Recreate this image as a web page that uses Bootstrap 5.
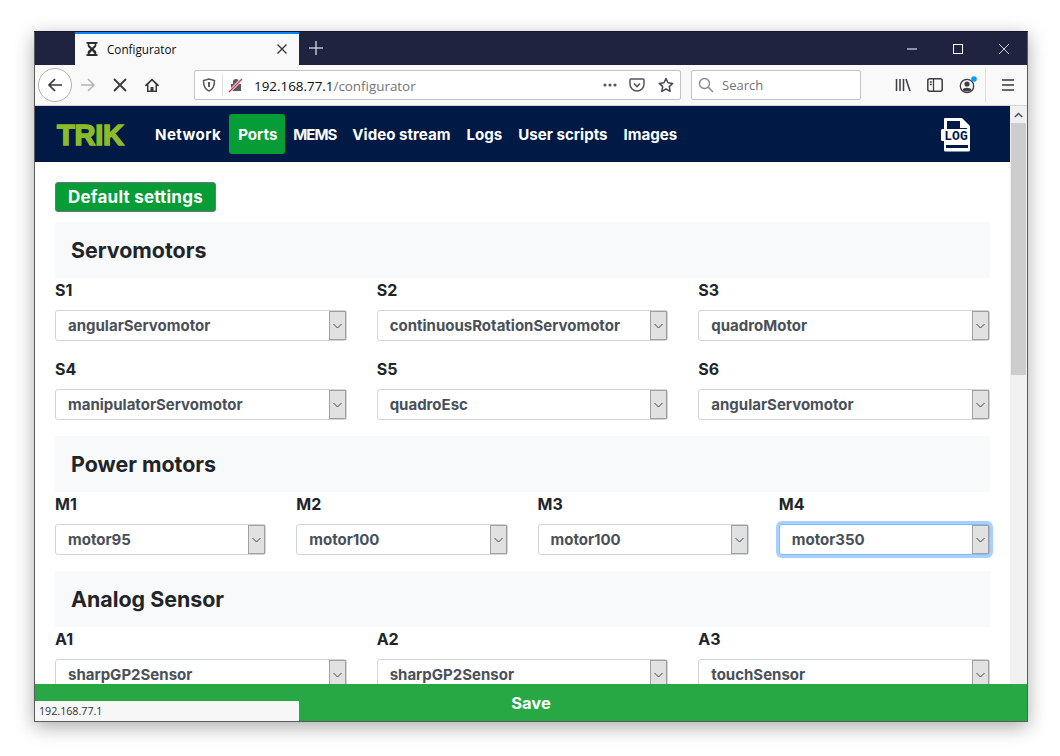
<!DOCTYPE html>
<html lang="en">
<head>
  <meta charset="UTF-8">
  <meta name="viewport" content="width=device-width, initial-scale=1.0">
  <title>Configurator</title>
  <link href="https://cdn.jsdelivr.net/npm/bootstrap@5.3.0/dist/css/bootstrap.min.css" rel="stylesheet">
  <style>
    html, body { height: 100%; overflow: hidden; background: #fff; }
    body { font-family: Inter, "Liberation Sans", sans-serif; }
    .win {
      width: 994px; height: 691px; margin: 31px 0 0 34px;
      border: 1px solid #5c5c5c; border-top-color: #14162a;
      box-shadow: 0 5px 18px rgba(0,0,0,.33);
      position: relative; overflow: hidden;
    }
    /* browser chrome */
    .titlebar { height: 33px; background: #202340; padding-left: 40px; }
    .tab {
      width: 224px; height: 33px; background: #f9f9fa; border-top: 2px solid #0a84ff;
      padding: 0 11px 2px 10px; font: 11.7px "Open Sans", sans-serif; color: #0c0c0d;
    }
    .tab-title { margin-left: 8px; flex: 1; }
    .newtab { margin-left: 2px; padding-bottom: 1px; }
    .winbtns { margin-left: auto; }
    .winbtn { width: 46px; height: 33px; display: flex; align-items: center; justify-content: center; }
    .toolbar { height: 41px; background: #f9f9fa; border-bottom: 1px solid #d6d6d7; }
    .back-circle {
      width: 34px; height: 34px; margin-left: 3px; border: 1px solid #b1b1b3; border-radius: 50%; background: #fff;
    }
    .tool-ico { width: 32px; height: 32px; }
    .urlbar {
      width: 487px; height: 30px; margin-left: 26px; background: #fff; border: 1px solid #c2c2c3; border-radius: 2px;
      font: 13.4px "Open Sans", sans-serif; color: #0c0c0d; white-space: nowrap;
    }
    .url-shield { margin-left: 7px; }
    .url-sep { width: 1px; height: 22px; background: #e0e0e1; margin: 0 5px 0 6px; }
    .url-text { margin-left: 10px; padding-top: 1px; }
    .url-path { color: #737373; }
    .url-dots { margin-left: auto; }
    .url-pocket { margin-left: 11px; }
    .url-star { margin-left: 13px; margin-right: 6px; }
    .searchbar {
      width: 170px; height: 30px; margin-left: 10px; background: #fff; border: 1px solid #c2c2c3; border-radius: 2px;
      font: 13px "Open Sans", sans-serif; color: #737373; padding-left: 6px; gap: 8px;
    }
    .tool-sep { width: 1px; height: 34px; background: #e0e0e1; margin-left: 1px; }
    .tool-account { margin-left: 1px; }
    .tool-menu { margin: 0 3px 0 6px; }
    /* page */
    .viewport { height: 615px; }
    .pagearea { flex: 1; min-width: 0; overflow: hidden; }
    .scrolltrack { width: 17px; background: #f0f0f0; }
    .scrollup { height: 17px; background: #f0f0f0; }
    .scrollthumb { height: 252px; background: #cdcdcd; margin: 0 1px; }
    .topnav { height: 56px; background: #001a45; padding: 0 0 0 22px; }
    .brand {
      font: 700 29px "Liberation Sans", sans-serif; color: #8cbb2a; -webkit-text-stroke: 1.5px #8cbb2a;
      width: 90px; letter-spacing: -.2px; line-height: 1; padding-top: 2px;
    }
    .topnav .nav-link {
      color: #fff; font-weight: 700; font-size: 15.1px; height: 40px; padding: 2px 8px 0; display: flex; align-items: center; border-radius: 3px;
    }
    .topnav .nav-link.active { background: #069c36; padding: 2px 9px 0; width: 56px; }
    .topnav .nav-link.link-wide { letter-spacing: .4px; }
    .topnav .nav-link.link-tight { letter-spacing: -1px; }
    .logico { margin: 0 37px 0 auto; }
    .content { padding: 20px 20px 0; }
    .btn-default-set {
      background: #069c36; border: 1px solid #6c757d; color: #fff; font-weight: 700; font-size: 17px;
      height: 30px; padding: 1px 12px 0; border-radius: 3px; line-height: 1; letter-spacing: .22px;
    }
    .btn-default-set:hover { background: #069c36; color: #fff; }
    .sect-head { height: 56px; margin-top: 10px; padding: 1px 16px 0; }
    .sect-next { margin-top: 0; }
    .sect-head h4 { font-size: 21.4px; font-weight: 700; color: #212529; margin: 0; }
    .port-row { --bs-gutter-x: 30px; }
    .port-lbl { display: block; font-weight: 700; font-size: 16px; line-height: 24px; color: #212529; margin-bottom: 8px; }
    .port-cell { margin-bottom: 16px; position: relative; }
    .port-sel {
      height: 31px; padding: 2px 24px 0 12px; font-size: 15px; font-weight: 700; color: #495057;
      background-image: none; border: 1px solid #ced4da; border-radius: 3px;
    }
    .port-sel.focused { border-color: #80bdff; box-shadow: 0 0 0 3px rgba(0,123,255,.35); }
    .sel-arrow {
      position: absolute; right: 1px; bottom: 1px; width: 17px; height: 29px;
      background: #e1e1e1; border: 1px solid #a0a0a0; display: flex; align-items: center; justify-content: center;
      pointer-events: none;
    }
    .savebar {
      position: absolute; left: 0; right: 0; bottom: 0; height: 37px; background: #28a745; color: #fff;
      font-weight: 700; font-size: 16.5px; border: 0; border-radius: 0; padding-top: 7px;
    }
    .savebar:hover { background: #28a745; color: #fff; }
    .statusline {
      position: absolute; left: 0; bottom: 0; width: 264px; height: 20px; background: #f7f7f7;
      font: 10.7px "Open Sans", sans-serif; color: #333; padding: 3px 0 0 4px;
    }
  </style>
</head>
<body>
  <div class="win">
    <!-- barra de titulo -->
    <div class="titlebar d-flex">
      <div class="tab d-flex align-items-center">
        <svg width="14" height="14" viewBox="0 0 14 14"><path d="M1.500 0h11v1.800h-1.200V3.500c0 1.700-1.700 2.600-2.700 3.500 1 .9 2.700 1.800 2.700 3.500v1.700h1.200V14h-11v-1.800h1.200V10.500c0-1.700 1.700-2.600 2.700-3.500-1-.9-2.700-1.800-2.700-3.500V1.800H1.500z" fill="#2b2b30"/><path d="M4.300 2h5.400v1.200L7 5.800 4.300 3.200zM4.300 12 7 8.800 9.700 12z" fill="#f9f9fa"/></svg>
        <span class="tab-title">Configurator</span>
        <svg width="12" height="12" viewBox="0 0 12 12"><path d="M1.500 1.500l9 9M10.500 1.500l-9 9" stroke="#3a3a3e" stroke-width="1.400"/></svg>
      </div>
      <div class="newtab d-flex align-items-center ps-2">
        <svg width="14" height="14" viewBox="0 0 14 14"><path d="M7 0v14M0 7h14" stroke="#c4c5cc" stroke-width="1.500"/></svg>
      </div>
      <div class="winbtns d-flex">
        <div class="winbtn"><svg width="10" height="10" viewBox="0 0 10 10"><path d="M0 5h10" stroke="#fff"/></svg></div>
        <div class="winbtn"><svg width="10" height="10" viewBox="0 0 10 10"><rect x=".5" y=".5" width="9" height="9" fill="none" stroke="#fff"/></svg></div>
        <div class="winbtn"><svg width="10" height="10" viewBox="0 0 10 10"><path d="M0 0l10 10M10 0L0 10" stroke="#fff" stroke-width=".8"/></svg></div>
      </div>
    </div>
    <!-- barra de herramientas -->
    <div class="toolbar d-flex align-items-center">
      <div class="back-circle d-flex align-items-center justify-content-center">
        <svg width="16" height="16" viewBox="0 0 16 16"><path d="M15 8H2M8 2 2 8l6 6" fill="none" stroke="#38383d" stroke-width="1.700"/></svg>
      </div>
      <div class="tool-ico d-flex align-items-center justify-content-center">
        <svg width="16" height="16" viewBox="0 0 16 16"><path d="M1 8h13M8 2l6 6-6 6" fill="none" stroke="#b4b4b6" stroke-width="1.500"/></svg>
      </div>
      <div class="tool-ico d-flex align-items-center justify-content-center">
        <svg width="14" height="14" viewBox="0 0 14 14"><path d="M1 1l12 12M13 1 1 13" stroke="#38383d" stroke-width="1.800"/></svg>
      </div>
      <div class="tool-ico d-flex align-items-center justify-content-center">
        <svg width="16" height="16" viewBox="0 0 16 16"><path d="M8 1.500.8 8.300 2 9.400l1-.9V15h10V8.500l1 .9 1.200-1.100zM11.500 13.500H9.500V10h-3v3.500H4.500V7.200L8 3.800l3.500 3.400z" fill="#38383d"/></svg>
      </div>
      <div class="urlbar d-flex align-items-center">
        <svg class="url-shield" width="14" height="14" viewBox="0 0 14 14"><path d="M7 1 1.500 2.500C1.500 8 3 11.500 7 13c4-1.500 5.500-5 5.500-10.500z" fill="none" stroke="#5a5a5e" stroke-width="1.500"/><path d="M6 4h2v5H6z" fill="#5a5a5e"/></svg>
        <span class="url-sep"></span>
        <svg width="16" height="16" viewBox="0 0 16 16"><path d="M5 7V5a3 3 0 0 1 6 0v2h2v7H3V7z" fill="#5a5a5e"/><path d="M1 15 14 2" stroke="#f9f9fa" stroke-width="3"/><path d="M1 15 14 2" stroke="#e22850" stroke-width="1.300"/></svg>
        <span class="url-text"><span>192.168.77.1</span><span class="url-path">/configurator</span></span>
        <svg class="url-dots" width="16" height="16" viewBox="0 0 16 16"><circle cx="3" cy="8" r="1.600" fill="#55555a"/><circle cx="8" cy="8" r="1.600" fill="#55555a"/><circle cx="13" cy="8" r="1.600" fill="#55555a"/></svg>
        <svg class="url-pocket" width="16" height="16" viewBox="0 0 16 16"><path d="M2 2h12a1 1 0 0 1 1 1v4c0 4-3 7-7 7s-7-3-7-7V3a1 1 0 0 1 1-1z" fill="none" stroke="#55555a" stroke-width="1.500"/><path d="M5 6.500 8 9.500l3-3" fill="none" stroke="#55555a" stroke-width="1.700"/></svg>
        <svg class="url-star" width="16" height="16" viewBox="0 0 16 16"><path d="M8 1.500l2 4.300 4.700.6-3.400 3.200.9 4.700L8 12l-4.200 2.300.9-4.700L1.300 6.400 6 5.800z" fill="none" stroke="#48484c" stroke-width="1.500" stroke-linejoin="round"/></svg>
      </div>
      <div class="searchbar d-flex align-items-center">
        <svg width="16" height="16" viewBox="0 0 16 16"><circle cx="6.500" cy="6.500" r="5" fill="none" stroke="#8a8a8c" stroke-width="1.400"/><path d="M10 10l5 5" stroke="#8a8a8c" stroke-width="1.500"/></svg>
        <span>Search</span>
      </div>
      <div class="d-flex align-items-center ms-auto">
        <div class="tool-ico d-flex align-items-center justify-content-center">
          <svg width="16" height="16" viewBox="0 0 16 16"><path d="M1.500 2v12M5 2v12M8.500 2v12M11 2l4 12" stroke="#3e3e42" stroke-width="1.500" fill="none"/></svg>
        </div>
        <div class="tool-ico d-flex align-items-center justify-content-center">
          <svg width="16" height="16" viewBox="0 0 16 16"><rect x=".8" y="1.800" width="14.400" height="12.400" rx="2" fill="none" stroke="#3e3e42" stroke-width="1.500"/><path d="M6.500 2v12M2.800 5h2M2.800 7.500h2" stroke="#3e3e42" stroke-width="1.300"/></svg>
        </div>
        <div class="tool-ico tool-account d-flex align-items-center justify-content-center">
          <svg width="20" height="20" viewBox="0 0 20 20"><circle cx="9" cy="11" r="6.700" fill="none" stroke="#3e3e42" stroke-width="1.300"/><circle cx="9" cy="9" r="2.600" fill="#3e3e42"/><path d="M4.500 15c1-3 8-3 9 0-2 2-7 2-9 0z" fill="#3e3e42"/><circle cx="16" cy="4" r="2.800" fill="#0a9dff"/></svg>
        </div>
        <span class="tool-sep"></span>
        <div class="tool-ico tool-menu d-flex align-items-center justify-content-center">
          <svg width="14" height="14" viewBox="0 0 14 14"><path d="M1 2h12M1 7h12M1 12h12" stroke="#38383d" stroke-width="1.600"/></svg>
        </div>
      </div>
    </div>

    <div class="viewport d-flex">
      <div class="pagearea">
        <!-- Menú de navegación -->
        <nav class="topnav d-flex align-items-center">
          <span class="brand">TRIK</span>
          <ul class="nav">
            <li class="nav-item"><a class="nav-link link-wide" href="#">Network</a></li>
            <li class="nav-item"><a class="nav-link active" href="#">Ports</a></li>
            <li class="nav-item"><a class="nav-link link-tight" href="#">MEMS</a></li>
            <li class="nav-item"><a class="nav-link" href="#">Video stream</a></li>
            <li class="nav-item"><a class="nav-link" href="#">Logs</a></li>
            <li class="nav-item"><a class="nav-link" href="#">User scripts</a></li>
            <li class="nav-item"><a class="nav-link" href="#">Images</a></li>
          </ul>
          <svg class="logico" width="32" height="35" viewBox="0 0 32 35">
            <path d="M4 1h17l8 8v24a1.500 1.500 0 0 1-1.500 1.500h-23A1.500 1.500 0 0 1 3 33V24H1.500A1.500 1.500 0 0 1 0 22.500V13.500A1.500 1.500 0 0 1 1.500 12H3V2a1 1 0 0 1 1-1z" fill="#fff"/>
            <path d="M6 4h13v7h7v1H6zM5 28h22v3H5z" fill="#001a45"/>
            <text x="15" y="23" text-anchor="middle" font-family="Liberation Mono, monospace" font-weight="700" font-size="13" fill="#001a45">LOG</text>
          </svg>
        </nav>

        <div class="content">
          <button type="button" class="btn btn-default-set">Default settings</button>

          <div class="sect-head bg-light d-flex align-items-center"><h4>Servomotors</h4></div>
          <div class="row port-row">
            <div class="col-4"><div class="port-cell"><label class="port-lbl">S1</label><select class="form-select port-sel"><option>angularServomotor</option></select><span class="sel-arrow"><svg width="9" height="6" viewBox="0 0 9 6"><path d="M.5 1 4.500 5l4-4" fill="none" stroke="#444" stroke-width="1"/></svg></span></div></div>
            <div class="col-4"><div class="port-cell"><label class="port-lbl">S2</label><select class="form-select port-sel"><option>continuousRotationServomotor</option></select><span class="sel-arrow"><svg width="9" height="6" viewBox="0 0 9 6"><path d="M.5 1 4.500 5l4-4" fill="none" stroke="#444" stroke-width="1"/></svg></span></div></div>
            <div class="col-4"><div class="port-cell"><label class="port-lbl">S3</label><select class="form-select port-sel"><option>quadroMotor</option></select><span class="sel-arrow"><svg width="9" height="6" viewBox="0 0 9 6"><path d="M.5 1 4.500 5l4-4" fill="none" stroke="#444" stroke-width="1"/></svg></span></div></div>
            <div class="col-4"><div class="port-cell"><label class="port-lbl">S4</label><select class="form-select port-sel"><option>manipulatorServomotor</option></select><span class="sel-arrow"><svg width="9" height="6" viewBox="0 0 9 6"><path d="M.5 1 4.500 5l4-4" fill="none" stroke="#444" stroke-width="1"/></svg></span></div></div>
            <div class="col-4"><div class="port-cell"><label class="port-lbl">S5</label><select class="form-select port-sel"><option>quadroEsc</option></select><span class="sel-arrow"><svg width="9" height="6" viewBox="0 0 9 6"><path d="M.5 1 4.500 5l4-4" fill="none" stroke="#444" stroke-width="1"/></svg></span></div></div>
            <div class="col-4"><div class="port-cell"><label class="port-lbl">S6</label><select class="form-select port-sel"><option>angularServomotor</option></select><span class="sel-arrow"><svg width="9" height="6" viewBox="0 0 9 6"><path d="M.5 1 4.500 5l4-4" fill="none" stroke="#444" stroke-width="1"/></svg></span></div></div>
          </div>

          <div class="sect-head sect-next bg-light d-flex align-items-center"><h4>Power motors</h4></div>
          <div class="row port-row">
            <div class="col-3"><div class="port-cell"><label class="port-lbl">M1</label><select class="form-select port-sel"><option>motor95</option></select><span class="sel-arrow"><svg width="9" height="6" viewBox="0 0 9 6"><path d="M.5 1 4.500 5l4-4" fill="none" stroke="#444" stroke-width="1"/></svg></span></div></div>
            <div class="col-3"><div class="port-cell"><label class="port-lbl">M2</label><select class="form-select port-sel"><option>motor100</option></select><span class="sel-arrow"><svg width="9" height="6" viewBox="0 0 9 6"><path d="M.5 1 4.500 5l4-4" fill="none" stroke="#444" stroke-width="1"/></svg></span></div></div>
            <div class="col-3"><div class="port-cell"><label class="port-lbl">M3</label><select class="form-select port-sel"><option>motor100</option></select><span class="sel-arrow"><svg width="9" height="6" viewBox="0 0 9 6"><path d="M.5 1 4.500 5l4-4" fill="none" stroke="#444" stroke-width="1"/></svg></span></div></div>
            <div class="col-3"><div class="port-cell"><label class="port-lbl">M4</label><select class="form-select port-sel focused"><option>motor350</option></select><span class="sel-arrow"><svg width="9" height="6" viewBox="0 0 9 6"><path d="M.5 1 4.500 5l4-4" fill="none" stroke="#444" stroke-width="1"/></svg></span></div></div>
          </div>

          <div class="sect-head sect-next bg-light d-flex align-items-center"><h4>Analog Sensor</h4></div>
          <div class="row port-row">
            <div class="col-4"><div class="port-cell"><label class="port-lbl">A1</label><select class="form-select port-sel"><option>sharpGP2Sensor</option></select><span class="sel-arrow"><svg width="9" height="6" viewBox="0 0 9 6"><path d="M.5 1 4.500 5l4-4" fill="none" stroke="#444" stroke-width="1"/></svg></span></div></div>
            <div class="col-4"><div class="port-cell"><label class="port-lbl">A2</label><select class="form-select port-sel"><option>sharpGP2Sensor</option></select><span class="sel-arrow"><svg width="9" height="6" viewBox="0 0 9 6"><path d="M.5 1 4.500 5l4-4" fill="none" stroke="#444" stroke-width="1"/></svg></span></div></div>
            <div class="col-4"><div class="port-cell"><label class="port-lbl">A3</label><select class="form-select port-sel"><option>touchSensor</option></select><span class="sel-arrow"><svg width="9" height="6" viewBox="0 0 9 6"><path d="M.5 1 4.500 5l4-4" fill="none" stroke="#444" stroke-width="1"/></svg></span></div></div>
          </div>
        </div>
      </div>
      <div class="scrolltrack">
        <div class="scrollup d-flex align-items-center justify-content-center">
          <svg width="9" height="6" viewBox="0 0 9 6"><path d="M.8 5 4.500 1.500 8.200 5" fill="none" stroke="#505050" stroke-width="1.500"/></svg>
        </div>
        <div class="scrollthumb"></div>
      </div>
    </div>

    <button type="button" class="btn savebar">Save</button>
    <div class="statusline">192.168.77.1</div>
  </div>

  <script src="https://cdn.jsdelivr.net/npm/bootstrap@5.3.0/dist/js/bootstrap.bundle.min.js"></script>
</body>
</html>
